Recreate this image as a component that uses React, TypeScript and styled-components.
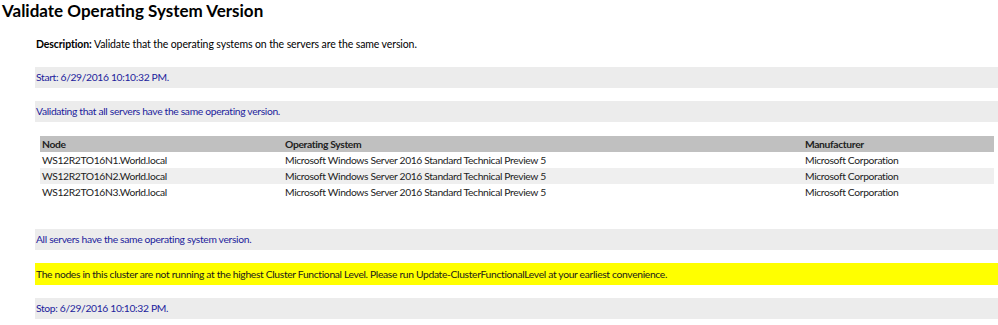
import styled, { createGlobalStyle } from 'styled-components';

const GlobalStyle = createGlobalStyle`
  html, body {
    margin: 0;
    padding: 0;
    background: #fff;
    overflow: hidden;
  }
  body {
    font-family: Lato, 'Open Sans', sans-serif;
  }
`;

const Page = styled.div`
  width: 998px;
  height: 325px;
  overflow: hidden;
`;

const Title = styled.h1`
  margin: 0;
  padding: 0 0 0 2px;
  height: 22px;
  line-height: 21px;
  font-size: 17px;
  font-weight: 700;
  color: #000;
`;

const Body = styled.div`
  padding-left: 35px;
  display: flex;
  flex-direction: column;
`;

const Description = styled.div`
  margin-top: 14px;
  height: 16px;
  line-height: 16px;
  font-size: 10.5px;
  letter-spacing: -0.1px;
  color: #000;
  padding-left: 1px;
  b {
    font-weight: 700;
  }
`;

const Bar = styled.div<{ $warn?: boolean; $top: number }>`
  margin-top: ${(p) => p.$top}px;
  height: ${(p) => (p.$warn ? 22 : 21)}px;
  line-height: ${(p) => (p.$warn ? 22 : 21)}px;
  padding-left: 1px;
  font-size: 10.3px;
  letter-spacing: -0.33px;
  background: ${(p) => (p.$warn ? '#ffff00' : '#ececec')};
  color: ${(p) => (p.$warn ? '#1a1a1a' : '#22229c')};
  white-space: nowrap;
`;

const Table = styled.table`
  margin: 14px 0 0 5px;
  width: 954px;
  border-collapse: collapse;
  font-size: 10.3px;
  letter-spacing: -0.35px;
  color: #222;
  table-layout: fixed;
`;

const Head = styled.th<{ $w: number }>`
  width: ${(p) => p.$w - 4}px;
  height: 16px;
  padding: 0 2px;
  text-align: left;
  font-weight: 700;
  background: #c0c0c0;
  line-height: 16px;
`;

const Row = styled.tr<{ $alt?: boolean }>`
  background: ${(p) => (p.$alt ? '#efefef' : '#fff')};
`;

const Cell = styled.td`
  height: 16px;
  padding: 0 2px;
  line-height: 16px;
  white-space: nowrap;
`;

const rows = ['WS12R2TO16N1.World.local', 'WS12R2TO16N2.World.local', 'WS12R2TO16N3.World.local'];

export default function App() {
  return (
    <Page>
      <GlobalStyle />
      <Title>Validate Operating System Version</Title>
      <Body>
        <Description>
          <b>Description:</b> Validate that the operating systems on the servers are the same version.
        </Description>
        <Bar $top={15}>Start: 6/29/2016 10:10:32 PM.</Bar>
        <Bar $top={13}>Validating that all servers have the same operating version.</Bar>
        <Table>
          <thead>
            <tr>
              <Head $w={243}>Node</Head>
              <Head $w={520}>Operating System</Head>
              <Head $w={191}>Manufacturer</Head>
            </tr>
          </thead>
          <tbody>
            {rows.map((r, i) => (
              <Row key={r} $alt={i === 1}>
                <Cell>{r}</Cell>
                <Cell>Microsoft Windows Server 2016 Standard Technical Preview 5</Cell>
                <Cell>Microsoft Corporation</Cell>
              </Row>
            ))}
          </tbody>
        </Table>
        <Bar $top={29}>All servers have the same operating system version.</Bar>
        <Bar $top={13} $warn>
          The nodes in this cluster are not running at the highest Cluster Functional Level. Please run
          Update-ClusterFunctionalLevel at your earliest convenience.
        </Bar>
        <Bar $top={13}>Stop: 6/29/2016 10:10:32 PM.</Bar>
      </Body>
    </Page>
  );
}
